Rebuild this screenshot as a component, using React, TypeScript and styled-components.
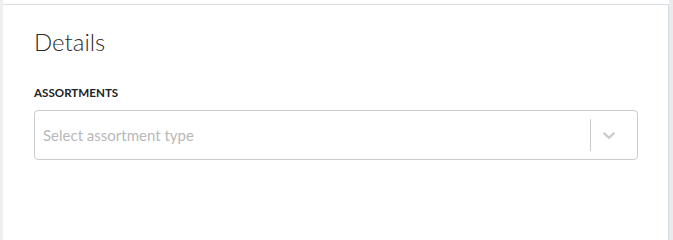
import styled, { createGlobalStyle } from "styled-components";

const GlobalStyle = createGlobalStyle`
  html, body {
    margin: 0;
    padding: 0;
    background: #fff;
  }
  body {
    font-family: Lato, "Open Sans", Arial, sans-serif;
  }
`;

const ChevronDown = () => (
  <svg height="20" width="20" viewBox="0 0 20 20" aria-hidden="true" focusable="false">
    <path d="M4.516 7.548c0.436-0.446 1.043-0.481 1.576 0l3.908 3.747 3.908-3.747c0.533-0.481 1.141-0.446 1.574 0 0.436 0.445 0.408 1.197 0 1.615-0.406 0.418-4.695 4.502-4.695 4.502-0.217 0.223-0.502 0.335-0.787 0.335s-0.57-0.112-0.789-0.335c0 0-4.287-4.084-4.695-4.502s-0.436-1.17 0-1.615z" />
  </svg>
);

const App = () => {
  return (
    <>
      <GlobalStyle />
      <Page>
        <Rail $width={3} $color="#efefef" />
        <Main>
          <Panel>
            <Title>Details</Title>
            <FieldLabel>ASSORTMENTS</FieldLabel>
            <SelectControl>
              <ValueArea>
                <Placeholder>Select assortment type</Placeholder>
              </ValueArea>
              <Indicators>
                <Separator />
                <DropdownIndicator>
                  <ChevronDown />
                </DropdownIndicator>
              </Indicators>
            </SelectControl>
          </Panel>
        </Main>
        <Rail $width={4} $color="#ebebeb" />
      </Page>
    </>
  );
};

export default App;

const Page = styled.div`
  display: flex;
  min-height: 100vh;
`;

const Rail = styled.div<{ $width: number; $color: string }>`
  flex: 0 0 ${(p) => p.$width}px;
  background: ${(p) => p.$color};
`;

const Main = styled.div`
  flex: 1;
  display: flex;
  flex-direction: column;
  padding-top: 4px;
`;

const Panel = styled.section`
  flex: 1;
  border-top: 1px solid #d6dee4;
  border-right: 1px solid #d6dee4;
  padding: 22px 30px 0 31px;
  display: flex;
  flex-direction: column;
`;

const Title = styled.h2`
  margin: 0;
  font-size: 24px;
  line-height: 29px;
  font-weight: 300;
  color: #2b2b2b;
`;

const FieldLabel = styled.label`
  display: block;
  margin-top: 30px;
  font-size: 11.6px;
  line-height: 13px;
  font-weight: 700;
  color: #222;
`;

const SelectControl = styled.div`
  margin-top: 11px;
  height: 50px;
  box-sizing: border-box;
  border: 1px solid #cccccc;
  border-radius: 4px;
  background: #fff;
  display: flex;
  align-items: center;
  cursor: pointer;
`;

const ValueArea = styled.div`
  flex: 1;
  padding: 0 8px;
  display: flex;
  align-items: center;
`;

const Placeholder = styled.span`
  font-size: 15px;
  color: #b8b8b8;
`;

const Indicators = styled.div`
  align-self: stretch;
  display: flex;
  align-items: center;
  padding-right: 10px;
`;

const Separator = styled.span`
  align-self: stretch;
  width: 1px;
  margin: 8px 0;
  background: #cccccc;
`;

const DropdownIndicator = styled.div`
  display: flex;
  padding: 8px;
  color: #cccccc;

  svg {
    fill: currentColor;
    display: block;
  }
`;
